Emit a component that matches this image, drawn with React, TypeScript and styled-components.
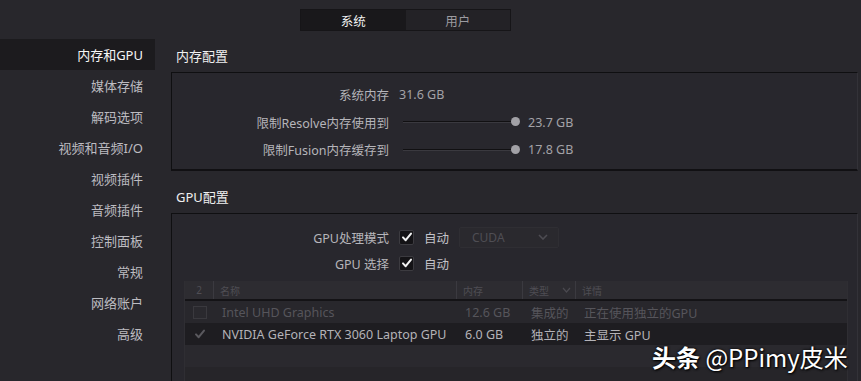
import styled, { createGlobalStyle } from 'styled-components';

const GlobalStyle = createGlobalStyle`
  html, body {
    margin: 0;
    padding: 0;
    background: #28272c;
  }
  * {
    box-sizing: border-box;
  }
`;

const NAV_ITEMS = [
  '内存和GPU',
  '媒体存储',
  '解码选项',
  '视频和音频I/O',
  '视频插件',
  '音频插件',
  '控制面板',
  '常规',
  '网络账户',
  '高级',
];

const GPU_ROWS = [
  { enabled: false, checked: false, name: 'Intel UHD Graphics', mem: '12.6 GB', kind: '集成的', detail: '正在使用独立的GPU' },
  { enabled: true, checked: true, name: 'NVIDIA GeForce RTX 3060 Laptop GPU', mem: '6.0 GB', kind: '独立的', detail: '主显示 GPU' },
];

const CheckIcon = ({ color }: { color: string }) => (
  <svg width="12" height="12" viewBox="0 0 12 12">
    <path d="M2 6.4 L4.7 9.2 L10 2.6" fill="none" stroke={color} strokeWidth="2" strokeLinecap="round" strokeLinejoin="round" />
  </svg>
);

const Chevron = () => (
  <svg width="10" height="6" viewBox="0 0 10 6">
    <path d="M1 1 L5 5 L9 1" fill="none" stroke="#4d4c52" strokeWidth="1.6" />
  </svg>
);

const App = () => {
  return (
    <>
      <GlobalStyle />
      <Page>
        <TopBar>
          <Tabs>
            <Tab $active>系统</Tab>
            <Tab>用户</Tab>
          </Tabs>
        </TopBar>

        <Main>
          <Sidebar>
            {NAV_ITEMS.map((item, i) => (
              <NavItem key={item} $active={i === 0}>
                {item}
              </NavItem>
            ))}
          </Sidebar>

          <Content>
            <SectionTitle>内存配置</SectionTitle>
            <Panel>
              <MemoryRows>
                <FormRow>
                  <Label>系统内存</Label>
                  <Value>31.6 GB</Value>
                </FormRow>
                <FormRow>
                  <Label>限制Resolve内存使用到</Label>
                  <Slider>
                    <Track />
                    <Knob />
                  </Slider>
                  <Value>23.7 GB</Value>
                </FormRow>
                <FormRow>
                  <Label>限制Fusion内存缓存到</Label>
                  <Slider>
                    <Track />
                    <Knob />
                  </Slider>
                  <Value>17.8 GB</Value>
                </FormRow>
              </MemoryRows>
            </Panel>

            <SectionTitle $spaced>GPU配置</SectionTitle>
            <Panel $open>
              <GpuRows>
                <GpuRow>
                  <Label>GPU处理模式</Label>
                  <CheckBox>
                    <CheckIcon color="#f2f2f2" />
                  </CheckBox>
                  <CheckText>自动</CheckText>
                  <Select>
                    <span>CUDA</span>
                    <Chevron />
                  </Select>
                </GpuRow>
                <GpuRow>
                  <Label>GPU 选择</Label>
                  <CheckBox>
                    <CheckIcon color="#f2f2f2" />
                  </CheckBox>
                  <CheckText>自动</CheckText>
                </GpuRow>
              </GpuRows>

              <Table>
                <HeaderRow>
                  <HeadCell $center>2</HeadCell>
                  <HeadCell>名称</HeadCell>
                  <HeadCell>内存</HeadCell>
                  <HeadCell $between>
                    类型
                    <svg width="9" height="6" viewBox="0 0 9 6">
                      <path d="M1 1 L4.5 5 L8 1" fill="none" stroke="#4a494f" strokeWidth="1.2" />
                    </svg>
                  </HeadCell>
                  <HeadCell>详情</HeadCell>
                </HeaderRow>
                {GPU_ROWS.map((row) => (
                  <BodyRow key={row.name} $enabled={row.enabled}>
                    <Cell $center>
                      {row.checked ? <CheckIcon color="#5a595e" /> : <RowBox />}
                    </Cell>
                    <Cell>{row.name}</Cell>
                    <Cell>{row.mem}</Cell>
                    <Cell>{row.kind}</Cell>
                    <Cell>{row.detail}</Cell>
                  </BodyRow>
                ))}
                <EmptyRow />
                <EmptyRow $alt />
              </Table>
            </Panel>
          </Content>
        </Main>

        <Watermark>
          <b>头条</b> @PPimy皮米
        </Watermark>
      </Page>
    </>
  );
};

export default App;

const Page = styled.div`
  position: relative;
  width: 861px;
  height: 381px;
  overflow: hidden;
  background: #28272c;
  font-family: 'Noto Sans', 'Noto Sans CJK SC', sans-serif;
  font-size: 12.5px;
  color: #b9b8bd;
`;

const TopBar = styled.div`
  height: 39px;
  padding: 9px 0 0 300px;
`;

const Tabs = styled.div`
  display: flex;
  width: 211px;
  height: 22px;
  border: 1px solid #161518;
  background: #232226;
`;

const Tab = styled.div<{ $active?: boolean }>`
  flex: 1;
  display: flex;
  align-items: center;
  justify-content: center;
  font-size: 12.5px;
  color: ${(p) => (p.$active ? '#f4f4f4' : '#9c9ba0')};
  background: ${(p) => (p.$active ? '#19181b' : 'transparent')};
`;

const Main = styled.div`
  display: flex;
`;

const Sidebar = styled.nav`
  width: 155px;
  flex-shrink: 0;
  display: flex;
  flex-direction: column;
`;

const NavItem = styled.div<{ $active?: boolean }>`
  height: 31px;
  display: flex;
  align-items: center;
  justify-content: flex-end;
  padding-right: 12px;
  padding-bottom: 1px;
  font-size: 13px;
  color: ${(p) => (p.$active ? '#f6f6f6' : '#bdbcc1')};
  background: ${(p) => (p.$active ? '#1c1b1e' : 'transparent')};
`;

const Content = styled.div`
  flex: 1;
  padding-left: 16px;
  padding-right: 3px;
`;

const SectionTitle = styled.div<{ $spaced?: boolean }>`
  height: 33px;
  margin-top: ${(p) => (p.$spaced ? '9px' : '0')};
  display: flex;
  align-items: center;
  padding-left: 5px;
  padding-bottom: 1px;
  font-size: 13px;
  color: #f0f0f0;
`;

const Panel = styled.div<{ $open?: boolean }>`
  border-top: 1px solid #0f0f11;
  border-left: 1px solid #0f0f11;
  border-right: 1px solid #333238;
  border-bottom: ${(p) => (p.$open ? 'none' : '2px solid #111013')};
  height: ${(p) => (p.$open ? '200px' : '99px')};
  background: #28272d;
`;

const MemoryRows = styled.div`
  display: flex;
  flex-direction: column;
  padding-top: 8px;
`;

const FormRow = styled.div`
  height: 27.5px;
  display: flex;
  align-items: center;
`;

const Label = styled.div`
  width: 217px;
  text-align: right;
  margin-right: 10px;
  color: #b6b5ba;
`;

const Value = styled.div`
  color: #a3a2a7;
`;

const Slider = styled.div`
  position: relative;
  width: 117px;
  height: 10px;
  margin-left: 4px;
  margin-right: 8px;
  display: flex;
  align-items: center;
`;

const Track = styled.div`
  width: 110px;
  height: 2px;
  background: #111012;
  border-bottom: 1px solid #3a393f;
`;

const Knob = styled.div`
  position: absolute;
  left: 108px;
  top: 0;
  width: 9px;
  height: 9px;
  border-radius: 50%;
  background: #a2a1a6;
`;

const GpuRows = styled.div`
  display: flex;
  flex-direction: column;
  padding-top: 10px;
`;

const GpuRow = styled.div`
  height: 26px;
  display: flex;
  align-items: center;
`;

const CheckBox = styled.div`
  width: 15px;
  height: 15px;
  border-radius: 2px;
  background: #141316;
  border: 1px solid #3c3b40;
  display: flex;
  align-items: center;
  justify-content: center;
`;

const CheckText = styled.div`
  margin-left: 10px;
  color: #c3c2c7;
  width: 35px;
`;

const Select = styled.div`
  width: 100px;
  height: 21px;
  display: flex;
  align-items: center;
  justify-content: space-between;
  padding: 0 10px 0 12px;
  border: 1px solid #2f2e33;
  border-radius: 2px;
  background: #2a292e;
  color: #4f4e54;
  font-size: 12px;
`;

const Table = styled.div`
  margin: 5px 9px 0 12px;
  border: 1px solid #2f2e33;
  border-top: none;
`;

const COLUMNS = '29px 243px 66px 53px 1fr';

const HeaderRow = styled.div`
  display: grid;
  grid-template-columns: ${COLUMNS};
  height: 20px;
  background: #2d2c31;
  border-bottom: 2px solid #141316;
`;

const HeadCell = styled.div<{ $center?: boolean; $between?: boolean }>`
  display: flex;
  align-items: center;
  justify-content: ${(p) => (p.$center ? 'center' : p.$between ? 'space-between' : 'flex-start')};
  padding: ${(p) => (p.$center ? '0' : '0 4px 0 6px')};
  border-right: 1px solid #3b3a40;
  font-size: 10px;
  color: #4f4e54;
  &:last-child {
    border-right: none;
  }
`;

const BodyRow = styled.div<{ $enabled?: boolean }>`
  display: grid;
  grid-template-columns: ${COLUMNS};
  height: 22px;
  align-items: center;
  background: ${(p) => (p.$enabled ? '#1e1d21' : '#28272c')};
  color: ${(p) => (p.$enabled ? '#b4b3b8' : '#56555b')};
`;

const Cell = styled.div<{ $center?: boolean }>`
  display: flex;
  align-items: center;
  justify-content: ${(p) => (p.$center ? 'center' : 'flex-start')};
  padding-left: ${(p) => (p.$center ? '0' : '8px')};
  white-space: nowrap;
  overflow: hidden;
`;

const RowBox = styled.div`
  width: 14px;
  height: 13px;
  border: 1px solid #3a393e;
  background: #2a292e;
`;

const EmptyRow = styled.div<{ $alt?: boolean }>`
  height: 22px;
  background: ${(p) => (p.$alt ? '#262529' : '#2a292e')};
`;

const Watermark = styled.div`
  position: absolute;
  left: 652px;
  top: 339px;
  font-family: 'Noto Sans CJK SC', 'Noto Sans', sans-serif;
  font-size: 24px;
  color: #ffffff;
  text-shadow: 0 0 3px #000, 1px 1px 2px #000;
  white-space: nowrap;
  b {
    font-weight: 700;
  }
`;
